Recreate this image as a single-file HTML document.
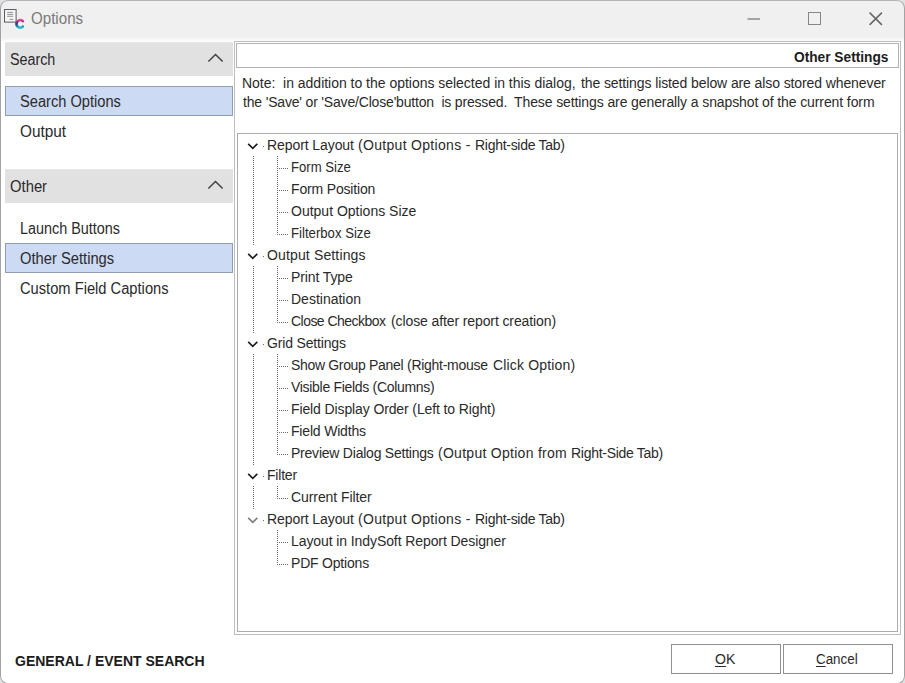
<!DOCTYPE html>
<html><head><meta charset="utf-8"><title>Options</title>
<style>
html,body{margin:0;padding:0;}
body{width:905px;height:683px;overflow:hidden;background:#e2e2e2;font-family:"Liberation Sans",sans-serif;position:relative;}
#win{position:absolute;left:0;top:0;width:905px;height:684px;box-sizing:border-box;border:1px solid #a3a3a3;border-top-color:#b4b4b4;border-radius:8px;pointer-events:none;}
#page{position:absolute;left:0;top:0;width:905px;height:684px;border-radius:8px;overflow:hidden;background:#fff;}
#page *{box-sizing:border-box;}
.abs{position:absolute;}
#titlebar{left:1px;top:1px;width:903px;height:36px;background:#f0f0f0;}
#titlebar2{left:1px;top:37px;width:903px;height:5px;background:linear-gradient(#f0f0f0,#ffffff);}
.tx{position:absolute;white-space:nowrap;color:#2a2a2a;transform-origin:0 0;}
#title{font-size:16px;color:#7a7a7a;}
.hdr{left:5px;width:228px;height:34px;background:#e1e1e1;border-top:1px solid #e8e8e8;}
.sel{left:5px;width:228px;height:30px;background:#cddaf4;border:1px solid #929cb0;}
.h{font-size:16px;}
.i{font-size:16px;}
#panel{left:234px;top:41px;width:667px;height:594px;border:1px solid #bdbdbd;background:#fff;}
#phead{left:236px;top:43px;width:663px;height:25px;border:1px solid #b2b2b2;}
#ptitle{font-weight:bold;font-size:14px;color:#1c1c1c;}
.note{font-size:14px;}
#tree{left:237px;top:133px;width:661px;height:499px;border:1px solid #acacac;}
.t{position:absolute;font-size:14px;color:#2a2a2a;white-space:nowrap;line-height:22px;height:22px;transform-origin:0 0;}
.btn{top:644px;width:110px;height:30px;border:1px solid #909090;background:#fff;}
.bt{font-size:14px;}
.bt u{text-underline-offset:2px;text-decoration-thickness:1px;}
#foot{font-weight:bold;font-size:15px;color:#1c1c1c;}
</style></head><body>
<div id="page">
<div id="titlebar" class="abs"></div>
<div id="titlebar2" class="abs"></div>
<div id="title" class="tx" style="left:31px;top:10px;transform:scale(0.9448,1.0000);">Options</div>

<div class="abs hdr" style="top:42px"></div>
<div class="abs hdr" style="top:169px"></div>
<div class="abs sel" style="top:86px"></div>
<div class="abs sel" style="top:243px"></div>
<div id="h0" class="tx h" style="left:10px;top:51px;transform:scale(0.8941,1.0000);">Search</div>
<div id="h1" class="tx h" style="left:10px;top:178px;transform:scale(0.9259,1.0000);">Other</div>
<div id="i0" class="tx i" style="left:20px;top:93px;transform:scale(0.9151,1.0000);">Search Options</div>
<div id="i1" class="tx i" style="left:20px;top:123px;transform:scale(0.9593,1.0000);">Output</div>
<div id="i2" class="tx i" style="left:20px;top:220px;transform:scale(0.8984,1.0000);">Launch Buttons</div>
<div id="i3" class="tx i" style="left:20px;top:250px;transform:scale(0.9208,1.0000);">Other Settings</div>
<div id="i4" class="tx i" style="left:20px;top:280px;transform:scale(0.9179,1.0000);">Custom Field Captions</div>

<svg class="abs" style="left:0;top:0" width="905" height="683" viewBox="0 0 905 683">
<!-- sidebar carets -->
<path d="M208.4 61.6 L215.5 54.5 L222.6 61.6" fill="none" stroke="#3f3f3f" stroke-width="1.45"/>
<path d="M208.4 188.6 L215.5 181.5 L222.6 188.6" fill="none" stroke="#3f3f3f" stroke-width="1.45"/>
<!-- window controls -->
<path d="M747.5 19 H760" stroke="#7a7a7a" stroke-width="1.3" fill="none"/>
<rect x="808.5" y="12.5" width="12" height="12" fill="none" stroke="#858585" stroke-width="1"/>
<path d="M869.6 12.6 L881.9 24.9 M881.9 12.6 L869.6 24.9" stroke="#676767" stroke-width="1.55" fill="none"/>
<!-- app icon: document -->
<rect x="4.5" y="9.5" width="11.6" height="12.6" fill="#f5f5f8" stroke="#5c5c5c" stroke-width="1"/>
<path d="M7.2 12.4 H13.2 M7.2 14.4 H13.2 M7.2 16.3 H13.2 M9.6 19.4 H13.3" stroke="#7a7a7a" stroke-width="0.8" fill="none"/>
<!-- C logo -->
<defs><linearGradient id="cg" x1="0" y1="0" x2="0" y2="1"><stop offset="0" stop-color="#e8468f"/><stop offset="0.42" stop-color="#2f2f86"/><stop offset="0.6" stop-color="#2b4a9a"/><stop offset="1" stop-color="#19c3c8"/></linearGradient></defs>
<path d="M22.9 21.2 A3.8 3.8 0 1 0 22.9 26.6" fill="none" stroke="url(#cg)" stroke-width="2.6" stroke-linecap="round"/>
</svg>

<div id="panel" class="abs"></div>
<div id="phead" class="abs"></div>
<div id="ptitle" class="tx" style="left:794px;top:49px;transform:scale(0.9793,1.0000);">Other Settings</div>
<div id="n0" class="tx note" style="left:242px;top:75px;letter-spacing:-0.019px;">Note:&nbsp; in addition to the options selected in this dialog,</div>
<div id="n0b" class="tx note" style="left:581px;top:75px;letter-spacing:-0.102px;">the settings listed below are also stored whenever</div>
<div id="n1" class="tx note" style="left:243px;top:94px;letter-spacing:-0.179px;">the 'Save' or 'Save/Close'button&nbsp; is pressed.</div>
<div id="n1b" class="tx note" style="left:514px;top:94px;letter-spacing:-0.103px;">These settings are generally a snapshot of the current form</div>
<div id="tree" class="abs"></div>
<svg class="abs" style="left:0;top:0" width="905" height="683" viewBox="0 0 905 683" shape-rendering="crispEdges"><rect x="263" y="146" width="1" height="1" fill="#6a6a6a"/><line x1="253.5" y1="156" x2="253.5" y2="245" stroke="#6a6a6a" stroke-width="1" stroke-dasharray="1 1"/><line x1="277.5" y1="156" x2="277.5" y2="235" stroke="#6a6a6a" stroke-width="1" stroke-dasharray="1 1"/><line x1="277" y1="168.5" x2="288" y2="168.5" stroke="#6a6a6a" stroke-width="1" stroke-dasharray="1 1"/><line x1="277" y1="190.5" x2="288" y2="190.5" stroke="#6a6a6a" stroke-width="1" stroke-dasharray="1 1"/><line x1="277" y1="212.5" x2="288" y2="212.5" stroke="#6a6a6a" stroke-width="1" stroke-dasharray="1 1"/><line x1="277" y1="234.5" x2="288" y2="234.5" stroke="#6a6a6a" stroke-width="1" stroke-dasharray="1 1"/><rect x="263" y="256" width="1" height="1" fill="#6a6a6a"/><line x1="253.5" y1="266" x2="253.5" y2="333" stroke="#6a6a6a" stroke-width="1" stroke-dasharray="1 1"/><line x1="277.5" y1="266" x2="277.5" y2="323" stroke="#6a6a6a" stroke-width="1" stroke-dasharray="1 1"/><line x1="277" y1="278.5" x2="288" y2="278.5" stroke="#6a6a6a" stroke-width="1" stroke-dasharray="1 1"/><line x1="277" y1="300.5" x2="288" y2="300.5" stroke="#6a6a6a" stroke-width="1" stroke-dasharray="1 1"/><line x1="277" y1="322.5" x2="288" y2="322.5" stroke="#6a6a6a" stroke-width="1" stroke-dasharray="1 1"/><rect x="263" y="344" width="1" height="1" fill="#6a6a6a"/><line x1="253.5" y1="354" x2="253.5" y2="465" stroke="#6a6a6a" stroke-width="1" stroke-dasharray="1 1"/><line x1="277.5" y1="354" x2="277.5" y2="455" stroke="#6a6a6a" stroke-width="1" stroke-dasharray="1 1"/><line x1="277" y1="366.5" x2="288" y2="366.5" stroke="#6a6a6a" stroke-width="1" stroke-dasharray="1 1"/><line x1="277" y1="388.5" x2="288" y2="388.5" stroke="#6a6a6a" stroke-width="1" stroke-dasharray="1 1"/><line x1="277" y1="410.5" x2="288" y2="410.5" stroke="#6a6a6a" stroke-width="1" stroke-dasharray="1 1"/><line x1="277" y1="432.5" x2="288" y2="432.5" stroke="#6a6a6a" stroke-width="1" stroke-dasharray="1 1"/><line x1="277" y1="454.5" x2="288" y2="454.5" stroke="#6a6a6a" stroke-width="1" stroke-dasharray="1 1"/><rect x="263" y="476" width="1" height="1" fill="#6a6a6a"/><line x1="253.5" y1="486" x2="253.5" y2="509" stroke="#6a6a6a" stroke-width="1" stroke-dasharray="1 1"/><line x1="277.5" y1="486" x2="277.5" y2="499" stroke="#6a6a6a" stroke-width="1" stroke-dasharray="1 1"/><line x1="277" y1="498.5" x2="288" y2="498.5" stroke="#6a6a6a" stroke-width="1" stroke-dasharray="1 1"/><rect x="263" y="520" width="1" height="1" fill="#6a6a6a"/><line x1="277.5" y1="530" x2="277.5" y2="565" stroke="#6a6a6a" stroke-width="1" stroke-dasharray="1 1"/><line x1="277" y1="542.5" x2="288" y2="542.5" stroke="#6a6a6a" stroke-width="1" stroke-dasharray="1 1"/><line x1="277" y1="564.5" x2="288" y2="564.5" stroke="#6a6a6a" stroke-width="1" stroke-dasharray="1 1"/></svg><svg class="abs" style="left:0;top:0" width="905" height="683" viewBox="0 0 905 683"><path d="M248.2 143.8 L252.8 148.3 L257.3 143.8" fill="none" stroke="#1c1c1c" stroke-width="1.65" stroke-linecap="butt" stroke-linejoin="miter"/><path d="M248.2 253.8 L252.8 258.3 L257.3 253.8" fill="none" stroke="#1c1c1c" stroke-width="1.65" stroke-linecap="butt" stroke-linejoin="miter"/><path d="M248.2 341.8 L252.8 346.3 L257.3 341.8" fill="none" stroke="#1c1c1c" stroke-width="1.65" stroke-linecap="butt" stroke-linejoin="miter"/><path d="M248.2 473.8 L252.8 478.3 L257.3 473.8" fill="none" stroke="#1c1c1c" stroke-width="1.65" stroke-linecap="butt" stroke-linejoin="miter"/><path d="M248.2 517.8 L252.8 522.3 L257.3 517.8" fill="none" stroke="#7d7d7d" stroke-width="1.65" stroke-linecap="butt" stroke-linejoin="miter"/></svg>
<div id="t0a" class="t" style="left:267px;top:134px;letter-spacing:-0.083px;">Report Layout</div>
<div id="t0b" class="t" style="left:358px;top:134px;letter-spacing:0.312px;">(Output Options -</div>
<div id="t0c" class="t" style="left:475px;top:134px;letter-spacing:-0.286px;">Right-side Tab)</div>
<div id="t1" class="t" style="left:291px;top:156px;transform:scale(0.9371,1.0000);">Form Size</div>
<div id="t2" class="t" style="left:291px;top:178px;letter-spacing:-0.167px;">Form Position</div>
<div id="t3" class="t" style="left:291px;top:200px;">Output Options Size</div>
<div id="t4" class="t" style="left:291px;top:222px;transform:scale(0.9406,1.0000);">Filterbox Size</div>
<div id="t5" class="t" style="left:267px;top:244px;letter-spacing:0.143px;">Output Settings</div>
<div id="t6" class="t" style="left:291px;top:266px;letter-spacing:-0.111px;">Print Type</div>
<div id="t7" class="t" style="left:291px;top:288px;">Destination</div>
<div id="t8a" class="t" style="left:291px;top:310px;letter-spacing:-0.538px;">Close Checkbox</div>
<div id="t8b" class="t" style="left:391px;top:310px;letter-spacing:-0.107px;">(close after report creation)</div>
<div id="t9" class="t" style="left:267px;top:332px;letter-spacing:-0.167px;">Grid Settings</div>
<div id="t10a" class="t" style="left:291px;top:354px;letter-spacing:-0.333px;">Show Group Panel</div>
<div id="t10b" class="t" style="left:407px;top:354px;letter-spacing:-0.273px;">(Right-mouse</div>
<div id="t10c" class="t" style="left:493px;top:354px;letter-spacing:0.167px;">Click Option)</div>
<div id="t11" class="t" style="left:291px;top:376px;letter-spacing:-0.304px;">Visible Fields (Columns)</div>
<div id="t12" class="t" style="left:291px;top:398px;letter-spacing:-0.118px;">Field Display Order (Left to Right)</div>
<div id="t13" class="t" style="left:291px;top:420px;letter-spacing:-0.182px;">Field Widths</div>
<div id="t14a" class="t" style="left:291px;top:442px;letter-spacing:-0.227px;">Preview Dialog Settings</div>
<div id="t14b" class="t" style="left:438px;top:442px;letter-spacing:0.278px;">(Output Option from</div>
<div id="t14c" class="t" style="left:571px;top:442px;letter-spacing:-0.286px;">Right-Side Tab)</div>
<div id="t15" class="t" style="left:267px;top:464px;letter-spacing:-0.200px;">Filter</div>
<div id="t16" class="t" style="left:291px;top:486px;letter-spacing:-0.077px;">Current Filter</div>
<div id="t17a" class="t" style="left:267px;top:508px;letter-spacing:-0.083px;">Report Layout</div>
<div id="t17b" class="t" style="left:358px;top:508px;letter-spacing:0.312px;">(Output Options -</div>
<div id="t17c" class="t" style="left:475px;top:508px;letter-spacing:-0.286px;">Right-side Tab)</div>
<div id="t18" class="t" style="left:291px;top:530px;letter-spacing:-0.091px;">Layout in IndySoft Report Designer</div>
<div id="t19" class="t" style="left:291px;top:552px;letter-spacing:-0.200px;">PDF Options</div>

<div id="foot" class="tx" style="left:15px;top:652px;transform:scale(0.9336,1.0000);">GENERAL / EVENT SEARCH</div>
<div class="abs btn" style="left:671px"></div>
<div class="abs btn" style="left:783px"></div>
<div id="b0" class="tx bt" style="left:715px;top:651px;transform:scale(1.0028,1.0000);"><u>O</u>K</div>
<div id="b1" class="tx bt" style="left:816px;top:651px;transform:scale(0.9541,1.0000);"><u>C</u>ancel</div>
</div>
<div id="win"></div>
</body></html>
